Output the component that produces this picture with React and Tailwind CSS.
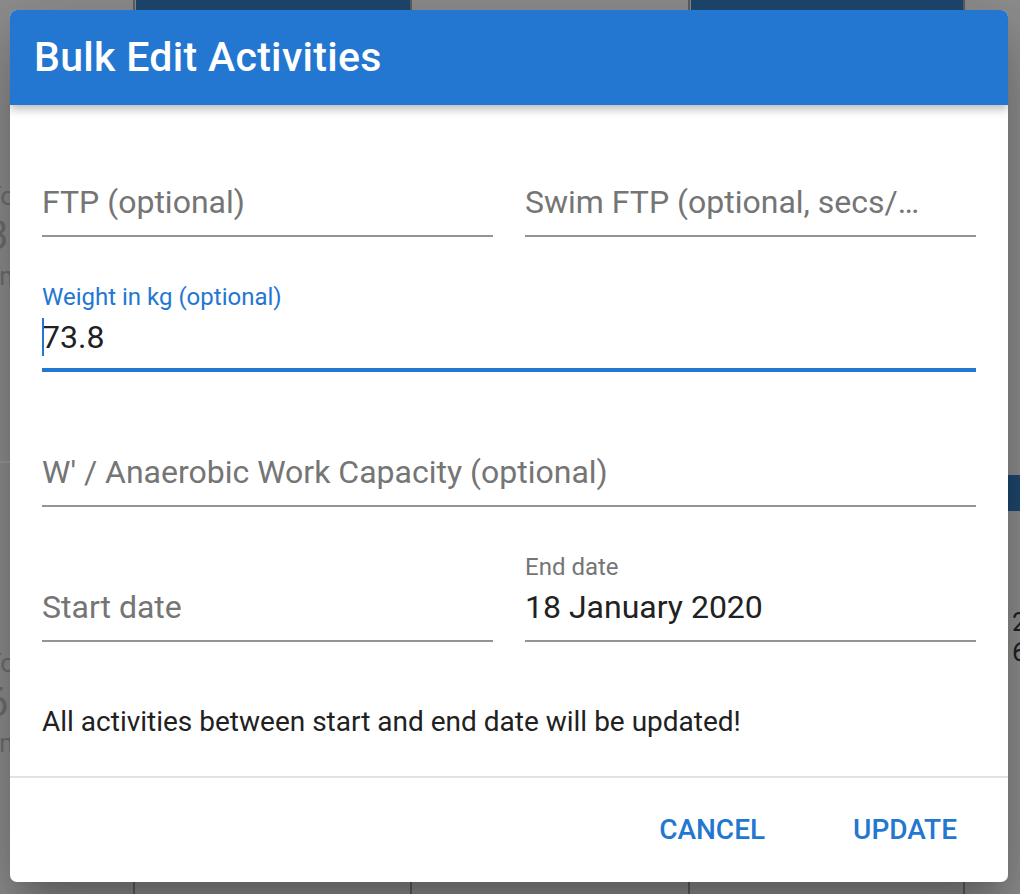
import React from "react";

// dimmed page behind the modal
function Backdrop() {
    return (
        <div className="absolute inset-0 flex ml-[-144px] bg-[#8e8e8e]">
            <div className="w-[277px] shrink-0 flex flex-col">
                <div className="h-[463px] border-b-2 border-[#9a9a9a] pt-[176px] pl-[130px] text-[#6f6f6f] text-[40px] leading-[40px]">
                    <div className="text-[26px]">Ton</div>
                    <div>363</div>
                    <div className="text-[26px]">km</div>
                </div>
                <div className="pt-[180px] pl-[130px] text-[#6f6f6f] text-[40px] leading-[40px]">
                    <div className="text-[26px]">Ton</div>
                    <div>6</div>
                    <div className="text-[26px]">km</div>
                </div>
            </div>
            <div className="w-[277px] shrink-0 border-l-2 border-[#5f5f5f] pl-[1px]">
                <div className="h-[12px] bg-[#1e4870]" />
            </div>
            <div className="w-[278px] shrink-0 border-l-2 border-[#5f5f5f]" />
            <div className="w-[275px] shrink-0 border-l-2 border-[#5f5f5f] pl-[1px]">
                <div className="h-[12px] bg-[#1e4870]" />
            </div>
            <div className="w-[277px] shrink-0 border-l-2 border-[#5f5f5f] pt-[475px]">
                <div className="h-[36px] bg-[#1e4870]" />
                <div className="pt-[96px] pl-[47px] text-[#222] text-[26px] leading-[30px]">
                    <div>2</div>
                    <div>6</div>
                </div>
            </div>
        </div>
    );
}

function Field({ label, value, placeholder, focused }) {
    return (
        <div className={focused ? "h-[96px] flex flex-col justify-end border-b-4 border-[#2377d1]" : "h-[96px] flex flex-col justify-end border-b-2 border-[#949494]"}>
            {label && (
                <div className={focused ? "text-[24px] leading-[28px] mb-[8px] text-[#2377d1]" : "text-[24px] leading-[28px] mb-[8px] text-[#757575]"}>
                    {label}
                </div>
            )}
            {value ? (
                <div className={focused ? "relative text-[32px] leading-[37px] text-[#212121] pb-[12px]" : "relative text-[32px] leading-[37px] text-[#212121] pb-[14px]"}>
                    {focused && <span className="absolute left-0 top-[-1px] w-[2px] h-[38px] bg-[#2377d1]" />}
                    {value}
                </div>
            ) : (
                <div className="text-[32px] leading-[37px] text-[#757575] pb-[14px] whitespace-nowrap overflow-hidden">
                    {placeholder}
                </div>
            )}
        </div>
    );
}

export default function App() {
    return (
        <div className="relative w-full h-[894px] overflow-hidden font-['Roboto',_'Liberation_Sans',_sans-serif]">
            <Backdrop />

            <div className="absolute left-[10px] top-[10px] w-[998px] bg-white rounded-[7px] overflow-hidden shadow-[0_20px_27px_-12px_rgba(0,0,0,0.2),0_43px_68px_5px_rgba(0,0,0,0.14),0_16px_83px_14px_rgba(0,0,0,0.12)]">
                <div className="relative z-10 h-[95px] bg-[#2377d1] px-[24px] flex items-center shadow-[0_4px_9px_rgba(0,0,0,0.28)]">
                    <h2 className="text-white text-[41px] font-medium leading-none tracking-[0.0075em]">Bulk Edit Activities</h2>
                </div>

                <div className="px-[32px] pt-[36px] pb-[37px] flex flex-col">
                    <div className="flex flex-col gap-[39px]">
                        <div className="grid grid-cols-2 gap-[32px]">
                            <Field placeholder="FTP (optional)" />
                            <Field placeholder="Swim FTP (optional, secs/…" />
                        </div>
                        <Field label="Weight in kg (optional)" value="73.8" focused />
                        <Field placeholder="W' / Anaerobic Work Capacity (optional)" />
                        <div className="grid grid-cols-2 gap-[32px]">
                            <Field placeholder="Start date" />
                            <Field label="End date" value="18 January 2020" />
                        </div>
                    </div>
                    <p className="mt-[62px] text-[28px] leading-[35px] text-[#212121]">
                        All activities between start and end date will be updated!
                    </p>
                </div>

                <div className="h-[2px] bg-[#e2e2e2]" />

                <div className="h-[104px] flex items-center justify-end gap-[58px] pr-[36px]">
                    <button type="button" className="px-[15px] py-[10px] text-[28px] leading-[34px] font-medium text-[#2377d1] uppercase">
                        Cancel
                    </button>
                    <button type="button" className="px-[15px] py-[10px] text-[28px] leading-[34px] font-medium text-[#2377d1] uppercase">
                        Update
                    </button>
                </div>
            </div>
        </div>
    );
}
